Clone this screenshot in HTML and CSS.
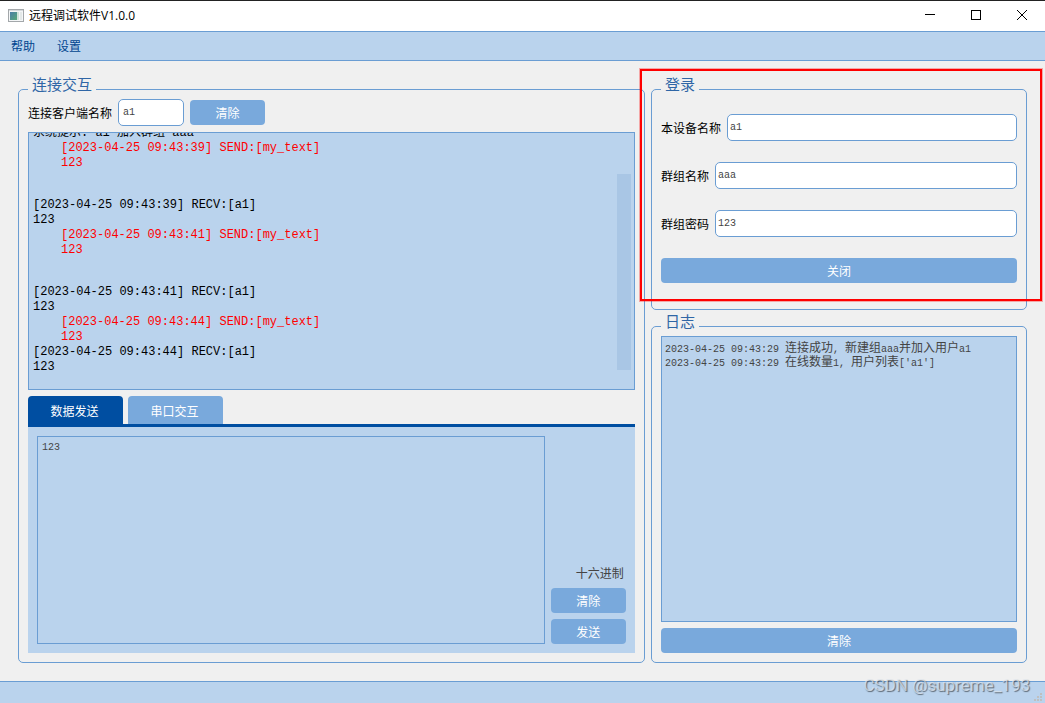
FILE: index.html
```html
<!DOCTYPE html>
<html lang="zh-CN">
<head>
<meta charset="utf-8">
<title>远程调试软件V1.0.0</title>
<link rel="stylesheet" href="styles.css">
</head>
<body>
<div class="window">
  <header class="titlebar">
    <svg class="app-icon" width="16" height="14" viewBox="0 0 16 14" aria-hidden="true">
      <defs>
        <linearGradient id="screen" x1="0" y1="0" x2="1" y2="1">
          <stop offset="0" stop-color="#4a7fa8"/>
          <stop offset="1" stop-color="#57a878"/>
        </linearGradient>
      </defs>
      <rect x="0.5" y="0.5" width="15" height="12" fill="#f4f6f7" stroke="#a3a7aa"/>
      <rect x="1" y="1" width="14" height="1" fill="#d5d9dc"/>
      <rect x="2" y="3" width="7" height="8" fill="url(#screen)"/>
      <rect x="9" y="3" width="2" height="8" fill="#cfe3da"/>
      <rect x="12" y="3" width="2" height="8" fill="#e3e8e8"/>
    </svg>
    <h1 class="window-title">远程调试软件V1.0.0</h1>
    <div class="window-controls">
      <button class="window-button" type="button" aria-label="最小化">
        <svg width="10" height="10" viewBox="0 0 10 10"><path d="M0 4.5h10" stroke="#000" fill="none"/></svg>
      </button>
      <button class="window-button" type="button" aria-label="最大化">
        <svg width="10" height="10" viewBox="0 0 10 10"><rect x="0.5" y="0.5" width="9" height="9" stroke="#000" fill="none"/></svg>
      </button>
      <button class="window-button" type="button" aria-label="关闭窗口">
        <svg width="10" height="10" viewBox="0 0 10 10"><path d="M0 0l10 10M10 0l-10 10" stroke="#000" fill="none"/></svg>
      </button>
    </div>
  </header>

  <nav class="menubar">
    <button class="menu-item" type="button">帮助</button>
    <button class="menu-item" type="button">设置</button>
  </nav>

  <main class="content">
    <fieldset class="group">
      <legend class="group-title">连接交互</legend>
      <div class="field">
        <label for="client">连接客户端名称</label>
        <input class="text-input short" id="client" type="text" value="a1">
        <button class="button fixed" type="button">清除</button>
      </div>

      <div class="chat">
        <div class="messages">
          <p class="system">系统提示<span class="code">: a1 </span>加入群组<span class="code"> aaa</span></p>
          <p class="send">[2023-04-25 09:43:39] SEND:[my_text]<br>123</p>
          <p class="recv spaced">[2023-04-25 09:43:39] RECV:[a1]<br>123</p>
          <p class="send">[2023-04-25 09:43:41] SEND:[my_text]<br>123</p>
          <p class="recv spaced">[2023-04-25 09:43:41] RECV:[a1]<br>123</p>
          <p class="send">[2023-04-25 09:43:44] SEND:[my_text]<br>123</p>
          <p class="recv">[2023-04-25 09:43:44] RECV:[a1]<br>123</p>
        </div>
        <div class="scroll-thumb"></div>
      </div>

      <div class="tabs">
        <div class="tab-list" role="tablist">
          <button class="tab active" type="button" role="tab" aria-selected="true">数据发送</button>
          <button class="tab" type="button" role="tab" aria-selected="false">串口交互</button>
        </div>
        <div class="tab-panel" role="tabpanel">
          <textarea class="message-input" aria-label="发送内容">123</textarea>
          <div class="actions">
            <label class="hex"><input class="hex-box" type="checkbox">十六进制</label>
            <button class="button" type="button">清除</button>
            <button class="button" type="button">发送</button>
          </div>
        </div>
      </div>
    </fieldset>

    <div class="side">
      <fieldset class="group login">
        <legend class="group-title">登录</legend>
        <div class="field">
          <label for="device">本设备名称</label>
          <input class="text-input" id="device" type="text" value="a1">
        </div>
        <div class="field">
          <label for="group">群组名称</label>
          <input class="text-input" id="group" type="text" value="aaa">
        </div>
        <div class="field">
          <label for="code">群组密码</label>
          <input class="text-input" id="code" type="text" value="123">
        </div>
        <button class="button" type="button">关闭</button>
        <div class="highlight"></div>
      </fieldset>

      <fieldset class="group journal">
        <legend class="group-title">日志</legend>
        <div class="log" role="log">
          <p><span class="latin">2023-04-25 09:43:29 </span>连接成功<span class="latin">, </span>新建组<span class="latin">aaa</span>并加入用户<span class="latin">a1</span></p>
          <p><span class="latin">2023-04-25 09:43:29 </span>在线数量<span class="latin">1, </span>用户列表<span class="latin">['a1']</span></p>
        </div>
        <button class="button" type="button">清除</button>
      </fieldset>
    </div>
  </main>

  <footer class="statusbar">
    <svg class="grip" width="9" height="9" viewBox="0 0 9 9" fill="#bfbfbf" aria-hidden="true">
      <path d="M6 0h2v2h-2zM3 3h2v2h-2zM6 3h2v2h-2zM0 6h2v2h-2zM3 6h2v2h-2zM6 6h2v2h-2z"/>
    </svg>
    <span class="watermark">CSDN @supreme_193</span>
  </footer>
</div>
</body>
</html>
```

FILE: styles.css
```css
:root {
  --line: #6a9dd3;
  --panel: #bad3ed;
  --button: #79a9dc;
  --accent: #004ea1;
  --base: #f0f0f0;
}

* {
  box-sizing: border-box;
}

body {
  margin: 0;
  background: var(--base);
  color: #000;
  font: 12px/15px "Noto Sans CJK SC", sans-serif;
}

button,
input,
textarea {
  font: inherit;
}

p {
  margin: 0;
}

.window {
  display: flex;
  flex-direction: column;
  min-height: 100vh;
}

.titlebar {
  display: flex;
  align-items: center;
  height: 31px;
  padding-left: 8px;
  border-top: 1px solid #222;
  background: #fff;
}

.app-icon {
  margin-right: 5px;
}

.window-title {
  flex: 1;
  margin: 0;
  font: 12px/16px "Open Sans", "Noto Sans CJK SC", sans-serif;
}

.window-controls {
  display: flex;
  align-self: stretch;
}

.window-button {
  display: grid;
  place-items: center;
  width: 46px;
  padding: 0 0 2px;
  border: 0;
  background: none;
}

.menubar {
  display: flex;
  height: 30px;
  border: solid var(--line);
  border-width: 1px 0;
  background: var(--panel);
}

.menu-item {
  padding: 0 11px 2px;
  border: 0;
  background: none;
  color: #00458f;
}

.content {
  display: grid;
  flex: 1;
  grid-template-columns: 5fr 3fr;
  gap: 6px;
  padding: 28px 18px 18px;
}

.group {
  position: relative;
  display: flex;
  flex-direction: column;
  gap: 6px;
  min-width: 0;
  margin: 0;
  padding: 9px;
  border: 1px solid var(--line);
  border-radius: 5px;
}

.group-title {
  position: absolute;
  top: -16px;
  left: 9px;
  padding: 0 4px;
  background: var(--base);
  color: #2f66a6;
  font-size: 15px;
  line-height: 20px;
}

.field {
  display: flex;
  align-items: center;
  gap: 6px;
}

.text-input {
  flex: 1;
  min-width: 0;
  height: 27px;
  padding: 0 2px;
  border: 1px solid var(--line);
  border-radius: 5px;
  background: #fff;
  color: #444;
  font: 10px "Liberation Mono", monospace;
}

.text-input.short {
  flex: none;
  width: 66px;
  padding: 0 4px;
}

.button {
  height: 25px;
  padding: 0;
  border: 0;
  border-radius: 4px;
  background: var(--button);
  color: #fff;
}

.button.fixed {
  width: 75px;
}

.chat {
  display: flex;
  flex: 1 1 0;
  min-height: 0;
  padding-right: 3px;
  border: 1px solid var(--line);
  background: var(--panel);
  overflow: hidden;
}

.messages {
  display: flex;
  flex: 1;
  flex-direction: column;
  justify-content: flex-end;
  padding: 0 4px 14px;
  font-family: "Liberation Mono", "Noto Sans CJK SC", monospace;
}

.code {
  white-space: pre;
}

.system {
  height: 15px;
}

.send {
  padding-left: 28px;
  color: #f00;
}

.spaced {
  margin-top: 27px;
}

.scroll-thumb {
  width: 14px;
  margin: 41px 0 19px;
  background: #a9c6e5;
}

.tabs {
  display: flex;
  flex: 1 1 1px;
  flex-direction: column;
  min-height: 0;
}

.tab-list {
  display: flex;
  gap: 5px;
  border-bottom: 3px solid var(--accent);
}

.tab {
  width: 95px;
  height: 28px;
  padding: 0 2px 0 0;
  border: 0;
  border-radius: 4px 4px 0 0;
  background: var(--button);
  color: #fff;
}

.tab.active {
  background: var(--accent);
}

.tab-panel {
  display: flex;
  flex: 1;
  gap: 6px;
  padding: 9px;
  background: var(--panel);
}

.message-input {
  flex: 1;
  min-width: 0;
  padding: 4px;
  border: 1px solid var(--line);
  background: none;
  color: #444;
  font: 10px/14px "Liberation Mono", monospace;
  resize: none;
}

.actions {
  display: flex;
  flex-direction: column;
  justify-content: flex-end;
  gap: 6px;
  width: 75px;
}

.hex {
  display: flex;
  align-items: center;
  justify-content: flex-end;
  height: 20px;
  padding-right: 2px;
  color: #444;
}

.hex-box {
  width: 13px;
  height: 13px;
  margin: 0 6px 0 0;
  appearance: none;
}

.side {
  display: flex;
  flex-direction: column;
  gap: 16px;
  min-width: 0;
}

.login {
  gap: 21px;
  padding: 24px 9px 26px;
}

.journal {
  flex: 1;
}

.highlight {
  position: absolute;
  inset: -21px -16px 8px -12px;
  border: 2px solid #f00;
  box-shadow: 0 0 0 1px rgba(255, 0, 0, 0.3);
  pointer-events: none;
}

.log {
  flex: 1;
  padding: 3px;
  border: 1px solid var(--line);
  background: var(--panel);
  color: #444;
}

.log p {
  height: 14px;
  line-height: 14px;
}

.latin {
  font: 10px/14px "Liberation Mono", monospace;
  white-space: pre;
}

.statusbar {
  position: relative;
  height: 22px;
  border-top: 1px solid var(--line);
  background: var(--panel);
}

.grip {
  position: absolute;
  right: 2px;
  bottom: 1px;
}

.watermark {
  position: absolute;
  right: 15px;
  bottom: 8px;
  color: rgba(225, 232, 240, 0.7);
  font: 17px/20px Roboto, sans-serif;
  text-shadow: 1px 1px 1px rgba(0, 0, 0, 0.5);
}
```
